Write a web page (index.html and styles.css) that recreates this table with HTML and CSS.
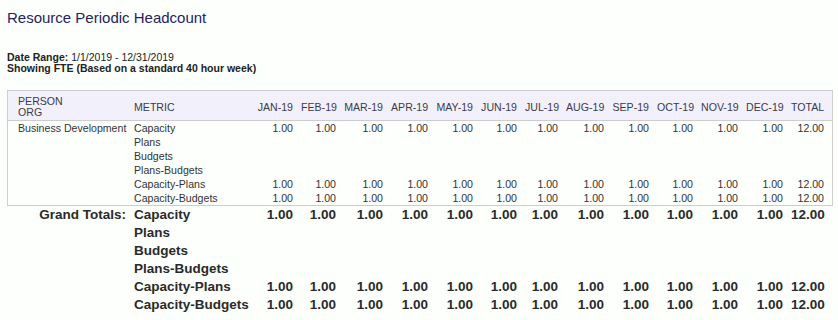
FILE: index.html
```html
<!DOCTYPE html>
<html>
<head>
<meta charset="utf-8">
<title>Resource Periodic Headcount</title>
<link rel="stylesheet" href="styles.css">
</head>
<body>
<h1 class="title">Resource Periodic Headcount</h1>
<div class="meta">
  <div><span class="label">Date Range:</span> 1/1/2019 - 12/31/2019</div>
  <div class="label">Showing FTE (Based on a standard 40 hour week)</div>
</div>

<table class="report boxed">
  <colgroup>
    <col class="c-org"><col class="c-metric">
    <col class="w45"><col class="w43"><col class="w47"><col class="w45"><col class="w45"><col class="w44">
    <col class="w41"><col class="w46"><col class="w45"><col class="w44"><col class="w45"><col class="w45"><col class="w45">
  </colgroup>
  <thead>
    <tr>
      <th class="first">PERSON<br>ORG</th>
      <th>METRIC</th>
      <th class="num">JAN-19</th><th class="num">FEB-19</th><th class="num">MAR-19</th><th class="num">APR-19</th>
      <th class="num">MAY-19</th><th class="num">JUN-19</th><th class="num">JUL-19</th><th class="num">AUG-19</th>
      <th class="num">SEP-19</th><th class="num">OCT-19</th><th class="num">NOV-19</th><th class="num">DEC-19</th>
      <th class="num last">TOTAL</th>
    </tr>
  </thead>
  <tbody>
    <tr>
      <td class="first">Business Development</td><td>Capacity</td>
      <td class="num">1.00</td><td class="num">1.00</td><td class="num">1.00</td><td class="num">1.00</td><td class="num">1.00</td><td class="num">1.00</td>
      <td class="num">1.00</td><td class="num">1.00</td><td class="num">1.00</td><td class="num">1.00</td><td class="num">1.00</td><td class="num">1.00</td>
      <td class="num last">12.00</td>
    </tr>
    <tr><td class="first"></td><td>Plans</td><td></td><td></td><td></td><td></td><td></td><td></td><td></td><td></td><td></td><td></td><td></td><td></td><td class="last"></td></tr>
    <tr><td class="first"></td><td>Budgets</td><td></td><td></td><td></td><td></td><td></td><td></td><td></td><td></td><td></td><td></td><td></td><td></td><td class="last"></td></tr>
    <tr><td class="first"></td><td>Plans-Budgets</td><td></td><td></td><td></td><td></td><td></td><td></td><td></td><td></td><td></td><td></td><td></td><td></td><td class="last"></td></tr>
    <tr>
      <td class="first"></td><td>Capacity-Plans</td>
      <td class="num">1.00</td><td class="num">1.00</td><td class="num">1.00</td><td class="num">1.00</td><td class="num">1.00</td><td class="num">1.00</td>
      <td class="num">1.00</td><td class="num">1.00</td><td class="num">1.00</td><td class="num">1.00</td><td class="num">1.00</td><td class="num">1.00</td>
      <td class="num last">12.00</td>
    </tr>
    <tr>
      <td class="first"></td><td>Capacity-Budgets</td>
      <td class="num">1.00</td><td class="num">1.00</td><td class="num">1.00</td><td class="num">1.00</td><td class="num">1.00</td><td class="num">1.00</td>
      <td class="num">1.00</td><td class="num">1.00</td><td class="num">1.00</td><td class="num">1.00</td><td class="num">1.00</td><td class="num">1.00</td>
      <td class="num last">12.00</td>
    </tr>
  </tbody>
</table>

<table class="report totals">
  <colgroup>
    <col class="c-org"><col class="c-metric">
    <col class="w45"><col class="w43"><col class="w47"><col class="w45"><col class="w45"><col class="w44">
    <col class="w41"><col class="w46"><col class="w45"><col class="w44"><col class="w45"><col class="w45"><col class="w45">
  </colgroup>
  <tbody>
    <tr>
      <td class="gt-label">Grand Totals:</td><td>Capacity</td>
      <td class="num">1.00</td><td class="num">1.00</td><td class="num">1.00</td><td class="num">1.00</td><td class="num">1.00</td><td class="num">1.00</td>
      <td class="num">1.00</td><td class="num">1.00</td><td class="num">1.00</td><td class="num">1.00</td><td class="num">1.00</td><td class="num">1.00</td>
      <td class="num last">12.00</td>
    </tr>
    <tr><td></td><td>Plans</td><td></td><td></td><td></td><td></td><td></td><td></td><td></td><td></td><td></td><td></td><td></td><td></td><td class="last"></td></tr>
    <tr><td></td><td>Budgets</td><td></td><td></td><td></td><td></td><td></td><td></td><td></td><td></td><td></td><td></td><td></td><td></td><td class="last"></td></tr>
    <tr><td></td><td>Plans-Budgets</td><td></td><td></td><td></td><td></td><td></td><td></td><td></td><td></td><td></td><td></td><td></td><td></td><td class="last"></td></tr>
    <tr>
      <td></td><td>Capacity-Plans</td>
      <td class="num">1.00</td><td class="num">1.00</td><td class="num">1.00</td><td class="num">1.00</td><td class="num">1.00</td><td class="num">1.00</td>
      <td class="num">1.00</td><td class="num">1.00</td><td class="num">1.00</td><td class="num">1.00</td><td class="num">1.00</td><td class="num">1.00</td>
      <td class="num last">12.00</td>
    </tr>
    <tr>
      <td></td><td>Capacity-Budgets</td>
      <td class="num">1.00</td><td class="num">1.00</td><td class="num">1.00</td><td class="num">1.00</td><td class="num">1.00</td><td class="num">1.00</td>
      <td class="num">1.00</td><td class="num">1.00</td><td class="num">1.00</td><td class="num">1.00</td><td class="num">1.00</td><td class="num">1.00</td>
      <td class="num last">12.00</td>
    </tr>
  </tbody>
</table>
</body>
</html>
```

FILE: styles.css
```css
html, body {
  margin: 0;
  padding: 0;
  background: #fdfffd;
}
body {
  padding: 9px 7px 0 7px;
  font-family: "Liberation Sans", Arial, sans-serif;
  color: #333;
}
.title {
  margin: 0;
  font-size: 15px;
  line-height: 18px;
  font-weight: normal;
  color: #1f2360;
}
.meta {
  margin-top: 25px;
  font-size: 10.5px;
  line-height: 11px;
  color: #222;
}
.label {
  font-weight: bold;
}
.report {
  table-layout: fixed;
  border-collapse: separate;
  border-spacing: 0;
  width: 824px;
  font-size: 10.6px;
}
.boxed {
  margin-top: 16px;
  border: 1px solid #cfcccf;
  width: 826px;
}
.totals {
  margin-left: 1px;
  font-size: 13.5px;
  font-weight: bold;
  color: #2a2a2a;
}
.c-org { width: 122px; }
.c-metric { width: 122px; }
.w41 { width: 41px; }
.w43 { width: 43px; }
.w44 { width: 44px; }
.w45 { width: 45px; }
.w46 { width: 46px; }
.w47 { width: 47px; }

.report th,
.report td {
  padding: 0 4px;
  white-space: nowrap;
  overflow: visible;
  text-align: left;
  font-weight: inherit;
}
.report thead th {
  background: #f2f1fb;
  font-weight: normal;
  color: #3a3a4a;
  line-height: 11px;
  padding-top: 5px;
  padding-bottom: 2px;
  vertical-align: middle;
  border-bottom: 1px solid #cfcccf;
}
.boxed tbody td {
  line-height: 14px;
  height: 14px;
}
.totals td {
  line-height: 18px;
  height: 18px;
}
.report .first {
  padding-left: 10px;
}
.report .num {
  text-align: right;
}
.report .last {
  padding-right: 8px;
}
.report .gt-label {
  text-align: right;
}
```
